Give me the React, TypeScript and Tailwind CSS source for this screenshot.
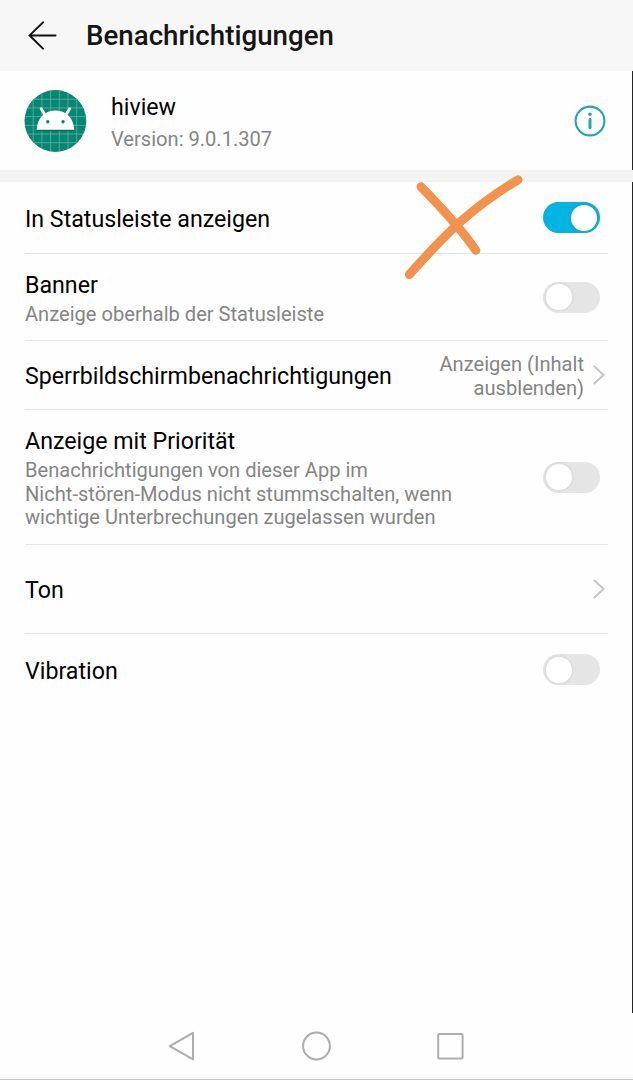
import { useState, type ReactNode } from "react";
import clsx from "clsx";

function Toggle({ defaultOn = false, label }: { defaultOn?: boolean; label: string }) {
  const [on, setOn] = useState(defaultOn);

  return (
    <button
      role="switch"
      aria-checked={on}
      aria-label={label}
      onClick={() => setOn(!on)}
      className={clsx(
        "mr-2 flex h-[31px] w-[57px] shrink-0 items-center rounded-full px-[3px]",
        on ? "justify-end bg-[#00b5e2]" : "justify-start bg-[#e5e5e5]"
      )}
    >
      <span
        className={clsx(
          "size-[26px] rounded-full bg-white ring-2",
          on ? "ring-[#1ea5c8]" : "ring-[#dedede]"
        )}
      />
    </button>
  );
}

function Chevron() {
  return (
    <svg width="14" height="22" viewBox="0 0 14 22" fill="none" className="mr-[2px] shrink-0">
      <path d="M1.8 2 L11.6 11 L1.8 20" stroke="#c4c4c4" strokeWidth="1.9" />
    </svg>
  );
}

function AppIcon() {
  const grid = [9.2, 17.9, 26.6, 35.3, 44, 52.7];

  return (
    <svg width="63" height="63" viewBox="0 0 63 63" className="shrink-0">
      <defs>
        <clipPath id="round">
          <circle cx="31.4" cy="31" r="30.9" />
        </clipPath>
      </defs>
      <g clipPath="url(#round)">
        <rect width="63" height="63" fill="#068673" />
        {grid.map((p) => (
          <path key={p} d={`M${p} 0V63M0 ${p}H63`} stroke="#5fb3a5" strokeWidth="0.8" />
        ))}
        <path d="M13 39.5H50L48 41.3H15Z" fill="#04705f" />
      </g>
      {/* robot head */}
      <path d="M12.6 39.7C13.2 28 21 20.4 31.4 20.4S49.7 28 50.3 39.7Z" fill="#fff" />
      <path d="M17.2 18.8L21.2 25.2M45.6 18.8L41.6 25.2" stroke="#fff" strokeWidth="2.9" strokeLinecap="round" />
      <circle cx="23.8" cy="31.8" r="1.7" fill="#068673" />
      <circle cx="39" cy="31.8" r="1.7" fill="#068673" />
    </svg>
  );
}

type RowProps = {
  title: string;
  description?: ReactNode;
  className: string;
  last?: boolean;
  children: ReactNode;
};

function Row({ title, description, className, last, children }: RowProps) {
  return (
    <div className={clsx("flex items-center justify-between", !last && "border-b border-[#e6e6e6]", className)}>
      <div className="pt-[2px]">
        <div className="text-[23.2px] leading-[30px] whitespace-nowrap text-black">{title}</div>
        {description && (
          <div className="mt-[3px] text-[20.1px] leading-[23.7px] whitespace-nowrap text-[#858585]">{description}</div>
        )}
      </div>
      {children}
    </div>
  );
}

export default function App() {
  return (
    <div className="relative flex h-[1080px] w-[633px] flex-col overflow-hidden bg-[#fefefe] font-['Roboto',sans-serif]">
      <header className="flex h-[71px] shrink-0 items-center bg-[#f7f7f7] pl-[28px]">
        <svg width="30" height="30" viewBox="0 0 30 30" fill="none" stroke="#111" strokeWidth="2" strokeLinecap="round">
          <path d="M27.5 14.4H1.6M15 1.4L1.6 14.4L15 27.6" />
        </svg>
        <h1 className="ml-[28px] pt-px text-[27.7px] font-medium text-[#151515]">Benachrichtigungen</h1>
      </header>

      <section className="flex h-[99px] shrink-0 items-center border-r border-[#252525] pt-[2px] pr-[26px] pl-6">
        <AppIcon />
        <div className="ml-6 flex-1 pt-[3px]">
          <div className="text-[23.2px] leading-[32px] text-black">hiview</div>
          <div className="text-[20.1px] leading-[32px] text-[#858585]">Version: 9.0.1.307</div>
        </div>
        <svg width="32" height="32" viewBox="0 0 32 32" fill="none" stroke="#22a5ac" className="mb-[2px] shrink-0">
          <circle cx="16" cy="16" r="14.4" strokeWidth="2.1" />
          <path d="M16 14.6V22.6" strokeWidth="3" strokeLinecap="round" />
          <circle cx="16" cy="9.2" r="1.8" fill="#22a5ac" stroke="none" />
        </svg>
      </section>

      <div className="h-3 shrink-0 bg-[#f3f3f3]" />

      <main className="h-[831px] shrink-0 border-r border-[#252525] pr-6 pl-[25px]">
        <Row title="In Statusleiste anzeigen" className="h-[72px]">
          <Toggle defaultOn label="In Statusleiste anzeigen" />
        </Row>
        <Row title="Banner" description="Anzeige oberhalb der Statusleiste" className="h-[87px]">
          <Toggle label="Banner" />
        </Row>
        <Row title="Sperrbildschirmbenachrichtigungen" className="h-[69px]">
          <div className="flex items-center gap-2">
            <div className="pt-1 text-right text-[20.1px] leading-[23.7px] whitespace-nowrap text-[#858585]">
              Anzeigen (Inhalt
              <br />
              ausblenden)
            </div>
            <Chevron />
          </div>
        </Row>
        <Row
          title="Anzeige mit Priorität"
          description={
            <>
              Benachrichtigungen von dieser App im
              <br />
              Nicht-stören-Modus nicht stummschalten, wenn
              <br />
              wichtige Unterbrechungen zugelassen wurden
            </>
          }
          className="h-[135px]"
        >
          <Toggle label="Anzeige mit Priorität" />
        </Row>
        <Row title="Ton" className="h-[89px]">
          <Chevron />
        </Row>
        <Row title="Vibration" className="h-[71px]" last>
          <Toggle label="Vibration" />
        </Row>
      </main>

      {/* system navigation */}
      <nav className="flex flex-1 items-center justify-between border-b border-[#c8c8c8] pr-[169px] pl-[167px]">
        <svg width="30" height="32" viewBox="0 0 30 32" fill="none" stroke="#adadad" strokeWidth="2" strokeLinejoin="round">
          <path d="M26 2.8V29.4L2.8 16.1Z" />
        </svg>
        <svg width="30" height="30" viewBox="0 0 30 30" fill="none" stroke="#adadad" strokeWidth="2">
          <circle cx="14.5" cy="15" r="13.4" />
        </svg>
        <svg width="28" height="28" viewBox="0 0 28 28" fill="none" stroke="#adadad" strokeWidth="2">
          <rect x="2.2" y="2" width="24.4" height="24.4" rx="1" />
        </svg>
      </nav>

      {/* hand-drawn cross over the first setting */}
      <svg
        width="124"
        height="108"
        viewBox="0 0 124 108"
        fill="none"
        stroke="#f2924c"
        strokeWidth="9"
        strokeLinecap="round"
        className="pointer-events-none absolute top-[173px] left-[402px]"
      >
        <path d="M19 13.8C34 29 58 54 73.8 77.3" />
        <path d="M116 6.8C72 33 46 58 7.3 101.6" />
      </svg>
    </div>
  );
}
